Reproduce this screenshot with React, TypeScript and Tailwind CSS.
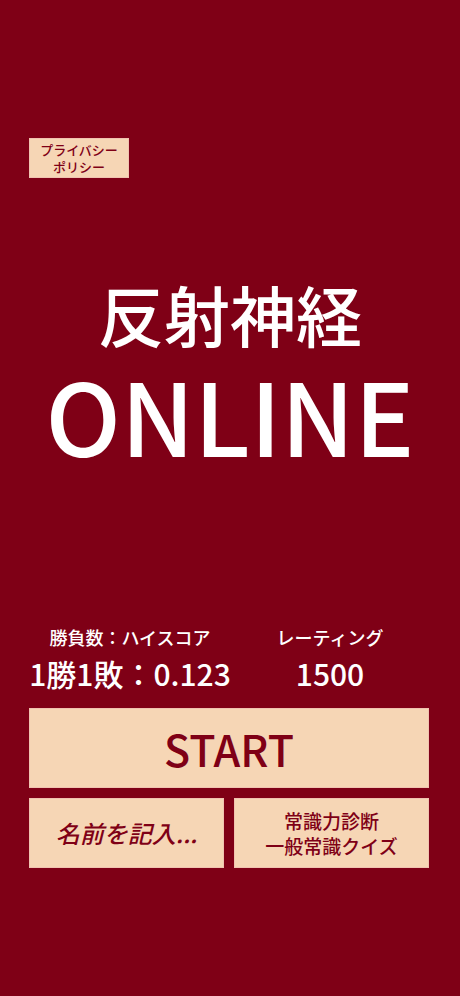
import React from "react";

const font = { fontFamily: '"Noto Sans CJK JP", "Noto Sans", sans-serif' };

export default function App() {
  return (
    <div className="w-[460px] h-[996px] bg-[#7f0016] flex flex-col font-medium" style={font}>
      <div className="pt-[138px] pl-[29px]">
        <button className="w-[100px] h-[40px] bg-[#f6d6b5] border border-[#f0c3b0] text-[#7f0016] text-[13px] leading-[17px] font-medium flex flex-col items-center justify-center">
          <span>プライバシー</span>
          <span>ポリシー</span>
        </button>
      </div>
      <div className="mt-[95px] flex flex-col items-center text-white">
        <div className="text-[66px] leading-[80px]">反射神経</div>
        <div className="text-[100px] leading-[110px] mt-[6px]">ONLINE</div>
      </div>
      <div className="mt-[156px] px-[30px] grid grid-cols-2 text-white">
        <div className="flex flex-col items-center">
          <div className="text-[18px] leading-[24px] whitespace-nowrap">勝負数：ハイスコア</div>
          <div className="text-[30px] leading-[40px] mt-[4px] whitespace-nowrap">1勝1敗：0.123</div>
        </div>
        <div className="flex flex-col items-center">
          <div className="text-[18px] leading-[24px] whitespace-nowrap">レーティング</div>
          <div className="text-[30px] leading-[40px] mt-[4px] whitespace-nowrap">1500</div>
        </div>
      </div>
      <div className="mt-[15px] pl-[29px] pr-[31px] flex flex-col gap-[10px]">
        <button className="h-[80px] w-full bg-[#f6d6b5] border border-[#f0c3b0] text-[#7f0016] text-[43px] font-medium flex items-center justify-center">
          START
        </button>
        <div className="grid grid-cols-2 gap-[10px]">
          <button className="h-[70px] bg-[#f6d6b5] border border-[#f0c3b0] text-[#7f0016] text-[24px] font-medium italic flex items-center justify-center">
            名前を記入...
          </button>
          <button className="h-[70px] bg-[#f6d6b5] border border-[#f0c3b0] text-[#7f0016] text-[19px] leading-[25px] font-medium flex flex-col items-center justify-center">
            <span>常識力診断</span>
            <span>一般常識クイズ</span>
          </button>
        </div>
      </div>
    </div>
  );
}
